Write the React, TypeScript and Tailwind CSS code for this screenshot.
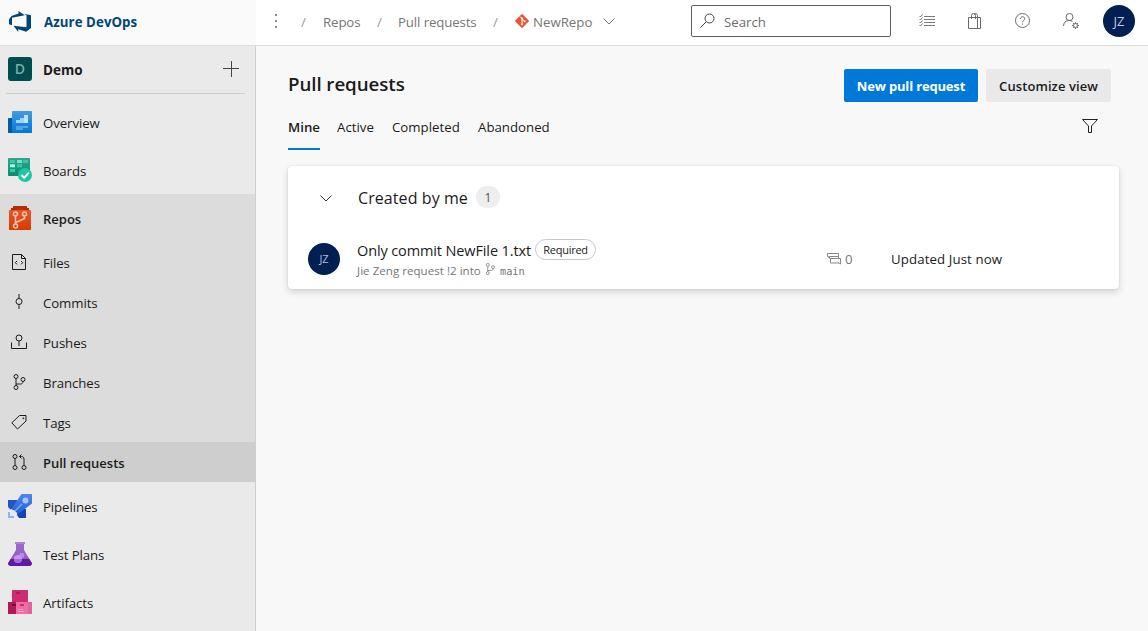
import type { ReactNode } from "react";

function Line({ children, className = "", size = 16 }: { children: ReactNode; className?: string; size?: number }) {
  return (
    <svg width={size} height={size} viewBox="0 0 16 16" fill="none" stroke="currentColor" className={`shrink-0 ${className}`}>
      {children}
    </svg>
  );
}

function Logo() {
  return (
    <svg width="22" height="22" viewBox="0 0 22 22" className="shrink-0" fill="#004578">
      <path d="M0 8.200 2.500 5l7-2.500V0l6.300 4.200L3 6.800v7.400L0 13.300z" />
      <path d="M22 4.300v12.700l-4.800 3.800-8-2.600V21L4.500 14.800l13 1.500V4.200L15 2.800z" />
    </svg>
  );
}

function OverviewIcon() {
  return (
    <svg width="24" height="24" viewBox="0 0 24 24" className="shrink-0">
      <defs>
        <linearGradient id="ov" x1="0" y1="0" x2="0" y2="1"><stop stopColor="#429ce3" /><stop offset="1" stopColor="#0476d6" /></linearGradient>
      </defs>
      <rect x="0" y="8" width="6" height="15" rx=".7" fill="#085a9f" />
      <rect x="4" y="1" width="20" height="22" rx=".7" fill="url(#ov)" />
      <path d="M8 10h4V8h4V5h4v8H8z" fill="#9ed3ff" />
      <path d="M16 5h4v8h-4z" fill="#c3e4ff" />
      <path d="M8 16h12v2h-5v2H8z" fill="#4ba6ee" />
    </svg>
  );
}

function BoardsIcon() {
  return (
    <svg width="24" height="24" viewBox="0 0 24 24" className="shrink-0">
      <defs>
        <linearGradient id="bd" x1="0" y1="0" x2="0" y2="1"><stop stopColor="#32a58c" /><stop offset="1" stopColor="#0b8a72" /></linearGradient>
      </defs>
      <rect width="22" height="18" rx=".7" fill="url(#bd)" />
      <path d="M2 2h5v3H2zM15 2h5v3h-5zM9 6.300h5v3H9zM2 11h5v3H2z" fill="#3cc6a8" />
      <path d="M9 2h5v3H9z" fill="#6fe5cc" />
      <path d="M2 6.300h5v3H2z" fill="#a5f7e5" />
      <circle cx="17" cy="17" r="7" fill="#1bc7a5" />
      <path d="m13.400 17 2.800 2.800 4.600-5.200" fill="none" stroke="#fff" strokeWidth="2" />
    </svg>
  );
}

function ReposIcon() {
  return (
    <svg width="24" height="24" viewBox="0 0 24 24" className="shrink-0">
      <defs>
        <linearGradient id="rp" x1="0" y1="0" x2="0" y2="1"><stop stopColor="#e3562b" /><stop offset="1" stopColor="#d93b01" /></linearGradient>
      </defs>
      <path d="M5 0h14v2h2v4H3V2h2z" fill="#b32d00" />
      <rect x="1" y="4" width="22" height="20" rx=".7" fill="url(#rp)" />
      <g fill="none" stroke="#fbc4b0" strokeWidth="1.500">
        <circle cx="7.500" cy="8" r="2" />
        <circle cx="16.500" cy="8" r="2" />
        <circle cx="7.500" cy="20" r="2" />
        <path d="M7.500 10v8M16.500 10v2.500L8 16.500" />
      </g>
    </svg>
  );
}

function PipelinesIcon() {
  return (
    <svg width="24" height="24" viewBox="0 0 24 24" className="shrink-0">
      <defs>
        <linearGradient id="pl" x1="0" y1="0" x2="0" y2="1"><stop stopColor="#5087ed" /><stop offset="1" stopColor="#2560d4" /></linearGradient>
      </defs>
      <path d="M0 6h9v8l-5 3-4-4z" fill="#2258bd" />
      <path d="M10 15h8v9h-7l-2-3z" fill="#1347ac" />
      <path d="M13.500 0H23.500a.5.5 0 0 1 .5.5v9L10 20l-6-6z" fill="url(#pl)" />
      <circle cx="17.500" cy="6.500" r="3" fill="#a5c6ff" />
      <path d="m7 17 7-7" stroke="#80a9f6" strokeWidth="1.300" />
      <path d="M0 18h2v4h4v2H0z" fill="#8db2fa" />
      <path d="m3 15.500 5.500 5.500" stroke="#dce8ff" strokeWidth="2" />
    </svg>
  );
}

function TestPlansIcon() {
  return (
    <svg width="24" height="24" viewBox="0 0 24 24" className="shrink-0">
      <defs>
        <linearGradient id="tp" x1="0" y1="0" x2="0" y2="1"><stop stopColor="#9b6bcb" /><stop offset="1" stopColor="#8b55c4" /></linearGradient>
      </defs>
      <path d="M8 1.500h8V8l7.500 12.500A2.300 2.300 0 0 1 21.500 24h-19a2.300 2.300 0 0 1-2-3.500L8 8z" fill="url(#tp)" />
      <path d="M2.700 17h18.600l2.200 3.500a2.300 2.300 0 0 1-2 3.500h-19a2.300 2.300 0 0 1-2-3.500z" fill="#5d1ba5" />
      <path d="M7 0h10v2H7z" fill="#a984d6" />
      <circle cx="13.800" cy="13.300" r="2.500" fill="#b98be5" />
      <circle cx="10" cy="17" r="4" fill="#c894ee" />
      <path d="M6 17h8a4 4 0 0 1-8 0z" fill="#a568dc" />
    </svg>
  );
}

function ArtifactsIcon() {
  return (
    <svg width="24" height="24" viewBox="0 0 24 24" className="shrink-0">
      <path d="M4 0h16v12H4z" fill="#cd2d70" />
      <path d="M8 2h4v2H8z" fill="#a81e5a" />
      <path d="M0 12h9v12H0z" fill="#b01b55" />
      <path d="M4 14h4v2H4z" fill="#7b0e39" />
      <path d="M8 12h16v12H8z" fill="#ef6da3" />
      <path d="M20 12h4v12h-4z" fill="#e6619a" />
      <path d="M12 14h4v2h-4z" fill="#c4306e" />
      <path d="M10 19.500h5M10 21.500h6" stroke="#f8a3c7" />
    </svg>
  );
}

function Branch({ className = "", size = 16 }: { className?: string; size?: number }) {
  return (
    <Line className={className} size={size}>
      <circle cx="5" cy="2.500" r="2" />
      <circle cx="5" cy="13.500" r="2" />
      <circle cx="12" cy="5.500" r="2" />
      <path d="M5 4.500v7M12 7.500c0 1.500-1 2.500-2.500 2.500H5" />
    </Line>
  );
}

const subItems = [
  { label: "Files", icon: <Line><path d="M1.500.5h9l4 4v11h-13zM10.500.5v4h4M6 7 4.300 8.700 6 10.400M10 7l1.700 1.700L10 10.400" /></Line> },
  { label: "Commits", icon: <Line><circle cx="8" cy="7.500" r="3" /><path d="M8 0v4.500M8 10.500V15" /></Line> },
  { label: "Pushes", icon: <Line><circle cx="8" cy="4" r="3" /><path d="M8 7v5M.5 8.500v6h15v-6" /></Line> },
  { label: "Branches", icon: <Branch /> },
  { label: "Tags", icon: <Line><path d="M8.500 1.500h6.500V7L6.500 15 .8 8.800z" /><circle cx="12.300" cy="4.300" r=".5" /></Line> },
  { label: "Pull requests", icon: <Line><circle cx="4" cy="2.500" r="2" /><circle cx="4" cy="13.500" r="2" /><circle cx="13" cy="13.500" r="2" /><path d="M4 4.500v7M13 11.500V5c0-1.500-1-2.500-2.500-2.500H8.500M10.500.5l-2 2 2 2" /></Line> },
];

function NavItem({ label, icon, bold = false }: { label: string; icon: ReactNode; bold?: boolean }) {
  return (
    <a className="flex h-12 items-center gap-[11px] pl-2">
      {icon}
      <span className={bold ? "pt-0.5 text-[13px] font-semibold" : "pt-0.5 tracking-[-0.1px]"}>{label}</span>
    </a>
  );
}

function Sidebar() {
  return (
    <nav className="w-64 shrink-0 border-r border-[#cfcfcf] bg-[#eaeaea]">
      <div className="ml-1.5 mr-2.5 flex h-12 items-center border-b border-[#cecece] pb-px pl-0.5">
        <div className="flex size-6 items-center justify-center rounded-[3px] bg-[#004b50] text-sm font-semibold text-[#7fa9ab]">D</div>
        <span className="ml-[11px] flex-1 pt-0.5 text-[13.500px] font-bold">Demo</span>
        <svg width="16" height="16" viewBox="0 0 16 16" className="mr-[6px]" stroke="#444"><path d="M8.500 0v16M0 7.500h16" /></svg>
      </div>
      <div className="pt-1">
        <NavItem label="Overview" icon={<OverviewIcon />} />
        <NavItem label="Boards" icon={<BoardsIcon />} />
      </div>
      <div className="bg-[#dcdcdc]">
        <NavItem label="Repos" icon={<ReposIcon />} bold />
        {subItems.map((item) => (
          <a
            key={item.label}
            className={`flex h-10 items-center gap-4 pl-[11px] ${item.label === "Pull requests" ? "bg-[#cecece] text-[13px] font-semibold" : "tracking-[-0.1px]"}`}
          >
            {item.icon}
            <span className="pt-0.5">{item.label}</span>
          </a>
        ))}
      </div>
      <NavItem label="Pipelines" icon={<PipelinesIcon />} />
      <NavItem label="Test Plans" icon={<TestPlansIcon />} />
      <NavItem label="Artifacts" icon={<ArtifactsIcon />} />
    </nav>
  );
}

function Header() {
  return (
    <header className="flex h-[46px] shrink-0 border-b border-[#dedede] bg-white">
      <div className="flex w-64 shrink-0 items-center bg-[#fafafa] pb-0.5 pl-[9px]">
        <Logo />
        <span className="ml-[13px] text-[13.250px] font-bold tracking-[0.080px] text-[#004578]">Azure DevOps</span>
      </div>
      <div className="flex w-[435px] shrink-0 items-center pb-0.5 tracking-[-0.120px] text-[#767676]">
        <svg width="4" height="16" viewBox="0 0 4 16" className="ml-[18px] -mt-0.5" fill="#8a8a8a"><path d="M1 1h2v2H1zM1 7h2v2H1zM1 13h2v2H1z" /></svg>
        <span className="ml-[23px] w-[22px] text-[#999]">/</span>
        <span className="w-[54px]">Repos</span>
        <span className="w-[21px] text-[#999]">/</span>
        <span className="w-[95px] whitespace-nowrap">Pull requests</span>
        <span className="w-[22px] text-[#999]">/</span>
        <svg width="14" height="14" viewBox="0 0 14 14" className="-mt-0.5 shrink-0">
          <path d="M7 0 14 7 7 14 0 7z" fill="#f05133" stroke="#f05133" strokeLinejoin="round" strokeWidth=".4" />
          <path d="m5 2.500 2 2v6M7 5l2.700 2.300" stroke="#fff" strokeWidth="1" fill="none" />
          <circle cx="7" cy="4.500" r="1.100" fill="#fff" /><circle cx="7" cy="10.300" r="1.100" fill="#fff" /><circle cx="9.700" cy="7.300" r="1.100" fill="#fff" />
        </svg>
        <span className="ml-1 w-[70px] tracking-normal">NewRepo</span>
        <svg width="12" height="7" viewBox="0 0 12 7" className="shrink-0" fill="none" stroke="#777"><path d="m.5.5 5.500 5.500L11.500.5" /></svg>
      </div>
      <div className="mt-[5px] flex h-8 w-[200px] items-center rounded-[2px] border border-[#5f5f5f] pl-2 text-[#6c6c6c]">
        <Line className="text-[#444]"><circle cx="9.500" cy="5.500" r="4.500" /><path d="M6.300 8.700.5 14.500" /></Line>
        <span className="ml-2 pt-px">Search</span>
      </div>
      <div className="ml-7 mt-[13px] flex h-4 items-center text-[#6b6b6b]">
        <Line><path d="M5 3.500h11M5 6.500h11M5 9.500h11M5 12.500h11M.5 3l1 1 2-2.500M.5 6l1 1 2-2.500M.5 9l1 1 2-2.500M.5 12l1 1 2-2.500" strokeWidth=".9" /></Line>
        <Line className="ml-8"><path d="M1.500 4.500h12v11h-12zM4.500 6V2.500a2 2 0 0 1 4 0V6M7 1.500c1-1.500 3.500-1 3.500 1V15.500" /></Line>
        <Line className="ml-8"><circle cx="7.500" cy="7.500" r="7" /><path d="M5.500 6c0-3 4.200-3 4.200-.3 0 1.800-2.200 1.700-2.200 3.600M7.500 10.500v1.200" /></Line>
        <Line className="ml-8"><circle cx="6.500" cy="4" r="3.500" /><path d="M.5 13c0-3.500 2.500-5.500 5.500-5.500 1.500 0 2.500.4 3.500 1" /><circle cx="12.500" cy="12.500" r="2" /><path d="M12.500 9v1.500M12.500 14.500V16M9 12.500h1.500M14.500 12.500H16M10 10l1 1M14 14l1 1M15 10l-1 1M11 14l-1 1" /></Line>
      </div>
      <div className="ml-6 mt-[5px] flex size-8 items-center justify-center rounded-full bg-[#001f52] text-[13px] text-[#c5cddd]">JZ</div>
    </header>
  );
}

function PullRequestCard() {
  return (
    <section className="mt-4 h-[123px] w-[831px] rounded bg-white shadow-[0_3px_7px_rgba(0,0,0,0.15),0_0_2px_rgba(0,0,0,0.12)]">
      <div className="flex h-16 items-center pl-8">
        <svg width="12" height="7" viewBox="0 0 12 7" fill="none" stroke="#333"><path d="m.5.5 5.500 5.500L11.500.5" /></svg>
        <h2 className="ml-[26px] w-[118px] whitespace-nowrap text-[16px] tracking-[0.080px]">Created by me</h2>
        <span className="-mt-0.5 flex h-[22px] w-6 items-center justify-center rounded-full bg-[#eee] pt-px text-[12px] text-[#555]">1</span>
      </div>
      <div className="flex h-[58px] items-center pl-5">
        <div className="flex size-8 items-center justify-center rounded-full bg-[#001f52] text-[11px] text-[#b3bed1]">JZ</div>
        <div className="ml-[17px] w-[470px]">
          <div className="flex h-[22px] items-center">
            <span className="w-[178px] whitespace-nowrap pt-px text-[14.500px] tracking-[-0.120px]">Only commit NewFile 1.txt</span>
            <span className="-mt-px flex h-[21px] w-[61px] items-center justify-center rounded-full border border-[#c8c8c8] text-[11px] tracking-[-0.250px]">Required</span>
          </div>
          <div className="flex h-[18px] items-center whitespace-nowrap text-[11.500px] text-[#767676]">
            <span className="w-[127px] pt-px tracking-[0.050px]">Jie Zeng request !2 into</span>
            <Branch size={12} className="-mt-0.5" />
            <span className="ml-1 pt-0.5 font-['DejaVu_Sans_Mono'] text-[10.250px]">main</span>
          </div>
        </div>
        <Line size={16} className="text-[#888]"><path d="M.5 2.500h11v3h-9L1.500 6.500v-1h-1zM3.500 7.500h10v5.500l-1.500-1H3.500v-1.500M2.500 5.500v2h1v4M11.500 5.500v2" /></Line>
        <span className="ml-[2px] w-[46px] text-[#767676]">0</span>
        <span className="tracking-[0.100px]">Updated Just now</span>
      </div>
    </section>
  );
}

export default function App() {
  return (
    <div className="flex h-[631px] w-[1148px] flex-col overflow-hidden bg-[#f8f8f8] font-['Open_Sans',sans-serif] text-[13.250px] leading-5 text-[#1b1b1b]">
      <Header />
      <div className="flex min-h-0 flex-1">
        <Sidebar />
        <main className="flex-1 pl-8 pt-[23px]">
          <div className="flex h-[33px] items-center pr-[37px]">
            <h1 className="flex-1 pb-[3px] text-[18.750px] font-semibold tracking-[-0.080px]">Pull requests</h1>
            <button className="h-[33px] w-[134px] whitespace-nowrap rounded-[2px] bg-[#0078d7] text-[13px] font-bold tracking-[-0.170px] text-white">New pull request</button>
            <button className="ml-2 h-[33px] w-[125px] whitespace-nowrap rounded-[2px] bg-[#e9e9e9] text-[13px] font-semibold tracking-[0.080px]">Customize view</button>
          </div>
          <div className="flex h-12 items-start pr-[50px]">
            <div className="mr-[17px] flex h-12 w-8 items-center border-b-2 border-[#0078d7] pt-1 text-[13.250px] font-semibold">Mine</div>
            <div className="flex h-12 w-[55px] items-center pt-0.5">Active</div>
            <div className="flex h-12 w-[86px] items-center pt-0.5">Completed</div>
            <div className="flex h-12 flex-1 items-center pt-0.5">Abandoned</div>
            <Line className="mt-4 text-[#222]"><path d="M.5 1.500h15L9.500 8v6.500h-3V8z" /></Line>
          </div>
          <PullRequestCard />
        </main>
      </div>
    </div>
  );
}
